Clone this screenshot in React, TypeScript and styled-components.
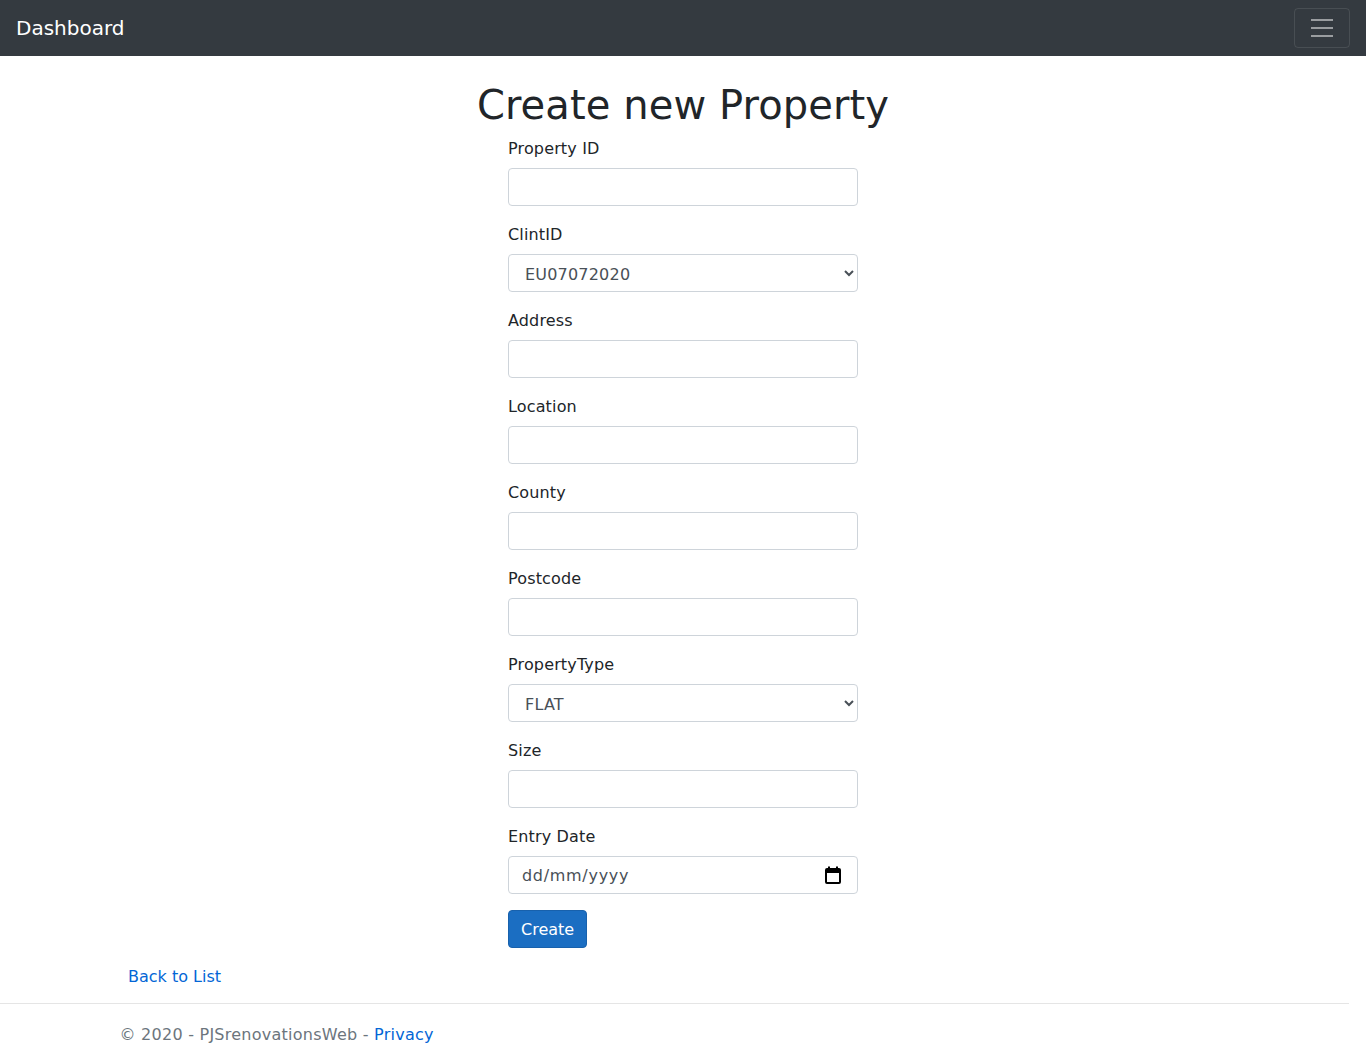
import React from "react";
import styled, { createGlobalStyle } from "styled-components";

const Global = createGlobalStyle`
  html, body {
    margin: 0;
    padding: 0;
  }
  body {
    font-family: "DejaVu Sans", "Liberation Sans", sans-serif;
    font-size: 16px;
    line-height: 1.5;
    color: #212529;
    background: #fff;
    min-height: 1064px;
    position: relative;
  }
  *, *::before, *::after {
    box-sizing: border-box;
  }
`;

const fields: { label: string; kind: "text" | "select"; options?: string[] }[] = [
  { label: "Property ID", kind: "text" },
  { label: "ClintID", kind: "select", options: ["EU07072020"] },
  { label: "Address", kind: "text" },
  { label: "Location", kind: "text" },
  { label: "County", kind: "text" },
  { label: "Postcode", kind: "text" },
  { label: "PropertyType", kind: "select", options: ["FLAT", "HOUSE", "BUNGALOW"] },
  { label: "Size", kind: "text" },
];

const App = () => {
  return (
    <>
      <Global />
      <Navbar>
        <Brand href="#">Dashboard</Brand>
        <Toggler aria-label="Toggle navigation">
          <svg width="30" height="30" viewBox="0 0 30 30">
            <path
              d="M4 7h22M4 15h22M4 23h22"
              stroke="rgba(255,255,255,0.5)"
              strokeWidth="2"
              strokeLinecap="butt"
            />
          </svg>
        </Toggler>
      </Navbar>
      <Container>
        <Main>
          <Title>Create new Property</Title>
          <Row>
            <Col>
              <form onSubmit={(e) => e.preventDefault()}>
                {fields.map((f) => (
                  <Group key={f.label}>
                    <Label>{f.label}</Label>
                    {f.kind === "select" ? (
                      <Select defaultValue={f.options![0]}>
                        {f.options!.map((o) => (
                          <option key={o}>{o}</option>
                        ))}
                      </Select>
                    ) : (
                      <Input type="text" />
                    )}
                  </Group>
                ))}
                <Group>
                  <Label>Entry Date</Label>
                  <DateBox>
                    <DateInput type="text" placeholder="dd/mm/yyyy" />
                    <svg width="16" height="18" viewBox="0 0 16 18">
                      <rect x="1" y="3" width="14" height="14" rx="1" fill="none" stroke="#000" strokeWidth="2" />
                      <rect x="1" y="3" width="14" height="4" fill="#000" />
                      <rect x="3" y="0.5" width="2" height="3" fill="#000" />
                      <rect x="11" y="0.5" width="2" height="3" fill="#000" />
                    </svg>
                  </DateBox>
                </Group>
                <Group>
                  <Button type="submit">Create</Button>
                </Group>
              </form>
            </Col>
          </Row>
          <BackRow>
            <Link href="#">Back to List</Link>
          </BackRow>
        </Main>
      </Container>
      <Footer>
        <FooterInner>
          &copy; 2020 - PJSrenovationsWeb - <Link href="#">Privacy</Link>
        </FooterInner>
      </Footer>
    </>
  );
};

export default App;

const Navbar = styled.nav`
  height: 56px;
  background-color: #343a40;
  display: flex;
  align-items: center;
  justify-content: space-between;
  padding: 8px 16px;
  margin-bottom: 24px;
`;

const Brand = styled.a`
  color: #fff;
  font-size: 20px;
  line-height: 30px;
  padding: 5px 0;
  text-decoration: none;
  white-space: nowrap;
`;

const Toggler = styled.button`
  width: 56px;
  height: 40px;
  padding: 4px 12px;
  background: transparent;
  border: 1px solid rgba(255, 255, 255, 0.1);
  border-radius: 4px;
  display: flex;
  align-items: center;
  justify-content: center;
`;

const Container = styled.div`
  width: 1140px;
  margin: 0 auto;
  padding: 0 15px;
`;

const Main = styled.main`
  padding-bottom: 15px;
`;

const Title = styled.h1`
  margin: 0 0 8px;
  padding-top: 1px;
  height: 48px;
  font-size: 40px;
  font-weight: 500;
  line-height: 1.2;
  text-align: center;
  letter-spacing: 0.1px;
`;

const Row = styled.div`
  display: flex;
  justify-content: center;
`;

const Col = styled.div`
  width: 380px;
  padding: 0 15px;
`;

const Group = styled.div`
  margin-bottom: 16px;
`;

const Label = styled.label`
  display: inline-block;
  padding-top: 1px;
  margin-bottom: 7px;
  letter-spacing: 0.15px;
`;

const Input = styled.input`
  display: block;
  width: 100%;
  height: 38px;
  padding: 6px 12px;
  font-family: inherit;
  font-size: 16px;
  line-height: 1.5;
  color: #495057;
  background: #fff;
  border: 1px solid #ced4da;
  border-radius: 4px;
  outline: none;
`;

const Select = styled.select`
  display: block;
  width: 100%;
  height: 38px;
  padding: 7px 8px 5px 12px;
  font-family: inherit;
  font-size: 16px;
  line-height: 1.5;
  letter-spacing: 0.2px;
  color: #495057;
  background: #fff;
  border: 1px solid #ced4da;
  border-radius: 4px;
  outline: none;
`;

const DateBox = styled.div`
  display: flex;
  align-items: center;
  width: 100%;
  height: 38px;
  padding: 0 16px 0 13px;
  border: 1px solid #ced4da;
  border-radius: 4px;
  background: #fff;
`;

const DateInput = styled.input`
  flex: 1;
  min-width: 0;
  border: none;
  outline: none;
  padding: 0;
  font-family: inherit;
  font-size: 16px;
  letter-spacing: 0.7px;
  color: #495057;
  &::placeholder {
    color: #495057;
  }
`;

const Button = styled.button`
  height: 38px;
  padding: 7px 12px 5px;
  font-family: inherit;
  font-size: 16px;
  line-height: 1.5;
  color: #fff;
  background-color: #1b6ec2;
  border: 1px solid #1861ac;
  border-radius: 4px;
`;

const BackRow = styled.div`
  padding-top: 1px;
`;

const Link = styled.a`
  color: #0366d6;
  text-decoration: none;
`;

const Footer = styled.footer`
  position: absolute;
  bottom: 0;
  width: 1349px;
  height: 61px;
  padding-top: 1px;
  border-top: 1px solid #e5e5e5;
  line-height: 59px;
  color: #6c757d;
  white-space: nowrap;
`;

const FooterInner = styled.div`
  width: 1140px;
  margin: 0 auto;
  padding: 0 15px;
  letter-spacing: 0.25px;
`;
